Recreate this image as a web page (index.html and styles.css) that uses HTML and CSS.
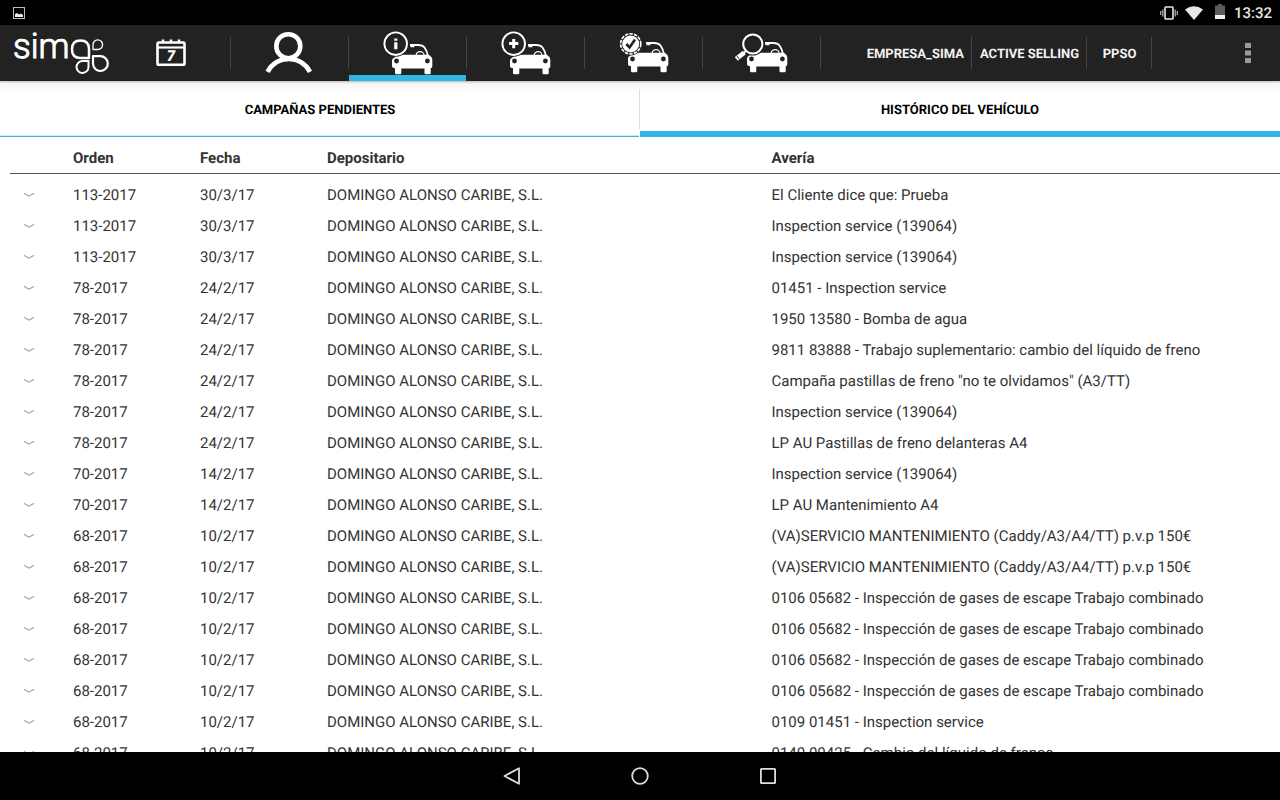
FILE: index.html
```html
<!DOCTYPE html>
<html lang="es">
<head>
<meta charset="utf-8">
<meta name="viewport" content="width=device-width, initial-scale=1">
<title>Histórico del vehículo</title>
<link rel="stylesheet" href="styles.css">
</head>
<body>
<svg class="defs" aria-hidden="true">
  <symbol id="car" viewBox="0 0 54 44" overflow="visible">
    <path d="M16 23.7H47.5Q51.3 25.5 51.3 29V35.5Q51.3 37 49.7 37.2V42Q49.7 43.2 48.5 43.2H44.8Q43.5 43.2 43.5 42V37.4H20.3V42Q20.3 43.2 19 43.2H15.3Q14 43.2 14 42V37.2Q11 37 11 35V29.5Q11 27.5 13.5 26.5Q14.5 24.5 16 23.7Z" fill="#fff"/>
    <path d="M29 14H37Q41.5 14 43.5 16.5Q46 20 46.8 24.5" fill="none" stroke="#fff" stroke-width="1.8"/>
    <path d="M29 13.2H33.4V16.2H29.6Z" fill="#fff"/>
    <path d="M35.2 24A3.9 3.4 0 0 1 43 24" fill="none" stroke="#fff" stroke-width="1.2"/>
    <circle cx="15.5" cy="30" r="2.4" fill="#222"/>
    <circle cx="46.4" cy="30" r="2.4" fill="#222"/>
  </symbol>
  <symbol id="chevron" viewBox="0 0 12 6">
    <path d="M.8 1.2L5 3.6Q6 4.1 7 3.6L11.2 1.2" fill="none" stroke="#aaa" stroke-width="1.2"/>
  </symbol>
</svg>

<div class="status">
  <svg width="12" height="12" viewBox="0 0 12 12" aria-hidden="true"><rect x=".5" y=".5" width="11" height="11" fill="none" stroke="#bbb"/><path d="M2 10V7L4 6L6 7.4L8 6.6L10 8V10Z" fill="#eee"/></svg>
  <div class="status-right">
    <svg width="18" height="14" viewBox="0 0 18 14" aria-hidden="true"><rect x="5" y="1" width="8" height="12" rx=".8" fill="none" stroke="#e6e6e6" stroke-width="1.6"/><path d="M.7 5V9M2.8 3.5V10.5M15.2 3.5V10.5M17.3 5V9" stroke="#aaa" stroke-width="1.3"/></svg>
    <svg width="18" height="14" viewBox="0 0 18 14" aria-hidden="true"><path d="M0 3.6Q9 -3 18 3.6L9 14Z" fill="#e8e8e8"/></svg>
    <svg class="battery" width="10" height="15" viewBox="0 0 10 15" aria-hidden="true"><path d="M0 1.5H3V0H7V1.5H10V11H0Z" fill="#5c5c5c"/><path d="M0 11H10V15H0Z" fill="#f2f2f2"/></svg>
    <span>13:32</span>
  </div>
</div>

<header class="bar">
  <svg class="logo" width="112" height="56" viewBox="0 0 112 56" role="img" aria-label="sima">
    <text x="13" y="33" class="logo-text">sim</text>
    <g fill="none" stroke="#fff" stroke-linejoin="round">
      <path d="M89 33H80.5Q72 33 72 24.2Q72 15.5 80.5 15.5Q89 15.5 89 24.2Z" stroke-width="2.5"/>
      <path d="M93 24.5V20A4.8 4.8 0 1 1 97.5 24.5Z" stroke-width="1.3"/>
      <path d="M93 31.2H100A7.4 7.4 0 1 1 93 38.8Z" stroke-width="2.2"/>
      <path d="M88.5 36H82A6 6 0 1 0 88.5 42Z" stroke-width="2"/>
    </g>
  </svg>
  <nav class="sections">
    <button class="section" aria-label="Agenda">
      <svg width="30" height="30" viewBox="0 0 30 30"><path d="M2.8 4.5H27.2Q28.5 4.5 28.5 5.7V25.5Q28.5 26.8 27.2 26.8H2.8Q1.5 26.8 1.5 25.5V5.7Q1.5 4.5 2.8 4.5Z" fill="none" stroke="#fff" stroke-width="2.6"/><path d="M2 9.5H28" stroke="#fff" stroke-width="2.2"/><path d="M7 1.5V4.5M15 1.5V4.5M23 1.5V4.5" stroke="#fff" stroke-width="2.6"/><text x="15" y="23" class="day">7</text></svg>
    </button>
    <button class="section" aria-label="Cliente">
      <svg width="54" height="44" viewBox="0 0 54 44"><circle cx="25.3" cy="15.2" r="12" fill="none" stroke="#fff" stroke-width="4.6"/><path d="M4.5 40.8C14 23.5 37.5 23.5 47 40.8" fill="none" stroke="#fff" stroke-width="4.6"/></svg>
    </button>
    <button class="section active" aria-label="Información del vehículo" aria-current="page">
      <svg width="54" height="44" viewBox="0 0 54 44"><use href="#car"/><circle cx="14.7" cy="12.7" r="13" fill="#222"/><circle cx="14.7" cy="12.7" r="11.3" fill="none" stroke="#fff" stroke-width="1.9"/><path d="M13.2 7.5H16.4V9.8H13.2ZM13.2 11.2H16.4V18.2H13.2Z" fill="#fff"/></svg>
    </button>
    <button class="section" aria-label="Añadir vehículo">
      <svg width="54" height="44" viewBox="0 0 54 44"><use href="#car"/><circle cx="14.7" cy="12.7" r="13" fill="#222"/><circle cx="14.7" cy="12.7" r="11.3" fill="none" stroke="#fff" stroke-width="1.9"/><path d="M14.7 8V17.2M10.1 12.6H19.3" stroke="#fff" stroke-width="3"/></svg>
    </button>
    <button class="section" aria-label="Vehículo verificado">
      <svg width="54" height="44" viewBox="0 0 54 44"><use href="#car" y="-2"/><circle cx="13.7" cy="12.9" r="11.6" fill="#222"/><circle cx="13.7" cy="12.9" r="10.1" fill="none" stroke="#fff" stroke-width="1.6" stroke-dasharray="3.4 1.2"/><circle cx="13.7" cy="12.9" r="8.5" fill="#fff"/><path d="M9.3 13L12.5 16.4L18 8.5" fill="none" stroke="#222" stroke-width="2.6"/></svg>
    </button>
    <button class="section" aria-label="Buscar vehículo">
      <svg width="54" height="44" viewBox="0 0 54 44"><use href="#car" x="1" y="-2"/><circle cx="17.8" cy="13" r="11.6" fill="#222"/><circle cx="17.8" cy="13" r="9.6" fill="none" stroke="#fff" stroke-width="2"/><path d="M11 20L8.3 22.4" stroke="#fff" stroke-width="1.8"/><path d="M9.3 21.5L1.3 28" stroke="#fff" stroke-width="4.8"/><path d="M2.1 25.2L4.5 28.4" stroke="#222" stroke-width="1"/></svg>
    </button>
  </nav>
  <nav class="links">
    <button class="link">EMPRESA_SIMA</button>
    <button class="link">ACTIVE SELLING</button>
    <button class="link">PPSO</button>
  </nav>
  <button class="more" aria-label="Más opciones">
    <svg width="6" height="20" viewBox="0 0 6 20"><path d="M0 0H6V5H0ZM0 7.5H6V12.5H0ZM0 15H6V20H0Z" fill="#999"/></svg>
  </button>
</header>

<div class="tabs" role="tablist">
  <button class="tab" role="tab" aria-selected="false">CAMPAÑAS PENDIENTES</button>
  <button class="tab" role="tab" aria-selected="true">HISTÓRICO DEL VEHÍCULO</button>
</div>

<main class="content">
  <table class="history">
    <colgroup><col class="c-toggle"><col class="c-short"><col class="c-short"><col class="c-dealer"><col class="c-fault"></colgroup>
    <thead><tr><td></td><th scope="col">Orden</th><th scope="col">Fecha</th><th scope="col">Depositario</th><th scope="col">Avería</th></tr></thead>
    <tbody>
      <tr><td><button class="toggle" aria-label="Desplegar"><svg width="12" height="6"><use href="#chevron"/></svg></button></td><td>113-2017</td><td>30/3/17</td><td>DOMINGO ALONSO CARIBE, S.L.</td><td>El Cliente dice que: Prueba</td></tr>
      <tr><td><button class="toggle" aria-label="Desplegar"><svg width="12" height="6"><use href="#chevron"/></svg></button></td><td>113-2017</td><td>30/3/17</td><td>DOMINGO ALONSO CARIBE, S.L.</td><td>Inspection service (139064)</td></tr>
      <tr><td><button class="toggle" aria-label="Desplegar"><svg width="12" height="6"><use href="#chevron"/></svg></button></td><td>113-2017</td><td>30/3/17</td><td>DOMINGO ALONSO CARIBE, S.L.</td><td>Inspection service (139064)</td></tr>
      <tr><td><button class="toggle" aria-label="Desplegar"><svg width="12" height="6"><use href="#chevron"/></svg></button></td><td>78-2017</td><td>24/2/17</td><td>DOMINGO ALONSO CARIBE, S.L.</td><td>01451 - Inspection service</td></tr>
      <tr><td><button class="toggle" aria-label="Desplegar"><svg width="12" height="6"><use href="#chevron"/></svg></button></td><td>78-2017</td><td>24/2/17</td><td>DOMINGO ALONSO CARIBE, S.L.</td><td>1950 13580 - Bomba de agua</td></tr>
      <tr><td><button class="toggle" aria-label="Desplegar"><svg width="12" height="6"><use href="#chevron"/></svg></button></td><td>78-2017</td><td>24/2/17</td><td>DOMINGO ALONSO CARIBE, S.L.</td><td>9811 83888 - Trabajo suplementario: cambio del líquido de freno</td></tr>
      <tr><td><button class="toggle" aria-label="Desplegar"><svg width="12" height="6"><use href="#chevron"/></svg></button></td><td>78-2017</td><td>24/2/17</td><td>DOMINGO ALONSO CARIBE, S.L.</td><td>Campaña pastillas de freno "no te olvidamos" (A3/TT)</td></tr>
      <tr><td><button class="toggle" aria-label="Desplegar"><svg width="12" height="6"><use href="#chevron"/></svg></button></td><td>78-2017</td><td>24/2/17</td><td>DOMINGO ALONSO CARIBE, S.L.</td><td>Inspection service (139064)</td></tr>
      <tr><td><button class="toggle" aria-label="Desplegar"><svg width="12" height="6"><use href="#chevron"/></svg></button></td><td>78-2017</td><td>24/2/17</td><td>DOMINGO ALONSO CARIBE, S.L.</td><td>LP AU Pastillas de freno delanteras A4</td></tr>
      <tr><td><button class="toggle" aria-label="Desplegar"><svg width="12" height="6"><use href="#chevron"/></svg></button></td><td>70-2017</td><td>14/2/17</td><td>DOMINGO ALONSO CARIBE, S.L.</td><td>Inspection service (139064)</td></tr>
      <tr><td><button class="toggle" aria-label="Desplegar"><svg width="12" height="6"><use href="#chevron"/></svg></button></td><td>70-2017</td><td>14/2/17</td><td>DOMINGO ALONSO CARIBE, S.L.</td><td>LP AU Mantenimiento A4</td></tr>
      <tr><td><button class="toggle" aria-label="Desplegar"><svg width="12" height="6"><use href="#chevron"/></svg></button></td><td>68-2017</td><td>10/2/17</td><td>DOMINGO ALONSO CARIBE, S.L.</td><td>(VA)SERVICIO MANTENIMIENTO (Caddy/A3/A4/TT) p.v.p 150€</td></tr>
      <tr><td><button class="toggle" aria-label="Desplegar"><svg width="12" height="6"><use href="#chevron"/></svg></button></td><td>68-2017</td><td>10/2/17</td><td>DOMINGO ALONSO CARIBE, S.L.</td><td>(VA)SERVICIO MANTENIMIENTO (Caddy/A3/A4/TT) p.v.p 150€</td></tr>
      <tr><td><button class="toggle" aria-label="Desplegar"><svg width="12" height="6"><use href="#chevron"/></svg></button></td><td>68-2017</td><td>10/2/17</td><td>DOMINGO ALONSO CARIBE, S.L.</td><td>0106 05682 - Inspección de gases de escape Trabajo combinado</td></tr>
      <tr><td><button class="toggle" aria-label="Desplegar"><svg width="12" height="6"><use href="#chevron"/></svg></button></td><td>68-2017</td><td>10/2/17</td><td>DOMINGO ALONSO CARIBE, S.L.</td><td>0106 05682 - Inspección de gases de escape Trabajo combinado</td></tr>
      <tr><td><button class="toggle" aria-label="Desplegar"><svg width="12" height="6"><use href="#chevron"/></svg></button></td><td>68-2017</td><td>10/2/17</td><td>DOMINGO ALONSO CARIBE, S.L.</td><td>0106 05682 - Inspección de gases de escape Trabajo combinado</td></tr>
      <tr><td><button class="toggle" aria-label="Desplegar"><svg width="12" height="6"><use href="#chevron"/></svg></button></td><td>68-2017</td><td>10/2/17</td><td>DOMINGO ALONSO CARIBE, S.L.</td><td>0106 05682 - Inspección de gases de escape Trabajo combinado</td></tr>
      <tr><td><button class="toggle" aria-label="Desplegar"><svg width="12" height="6"><use href="#chevron"/></svg></button></td><td>68-2017</td><td>10/2/17</td><td>DOMINGO ALONSO CARIBE, S.L.</td><td>0109 01451 - Inspection service</td></tr>
      <tr><td><button class="toggle" aria-label="Desplegar"><svg width="12" height="6"><use href="#chevron"/></svg></button></td><td>68-2017</td><td>10/2/17</td><td>DOMINGO ALONSO CARIBE, S.L.</td><td>0140 00425 - Cambio del líquido de frenos</td></tr>
    </tbody>
  </table>
</main>

<footer class="system">
  <button class="key" aria-label="Atrás"><svg width="20" height="20" viewBox="0 0 20 20"><path d="M17 2.2V17.8L2.5 10Z"/></svg></button>
  <button class="key" aria-label="Inicio"><svg width="20" height="20" viewBox="0 0 20 20"><circle cx="10" cy="10" r="7.8"/></svg></button>
  <button class="key" aria-label="Recientes"><svg width="20" height="20" viewBox="0 0 20 20"><rect x="2.9" y="2.9" width="14.2" height="14.2" rx=".6"/></svg></button>
</footer>
</body>
</html>
```
FILE: styles.css
```css
* { box-sizing: border-box; }

body {
  margin: 0;
  height: 100vh;
  display: flex;
  flex-direction: column;
  overflow: hidden;
  background: #fff;
  color: #333;
  font: 15px/20px Roboto, "Liberation Sans", sans-serif;
  text-rendering: geometricPrecision;
}

button {
  margin: 0;
  padding: 0;
  border: 0;
  background: none;
  color: inherit;
  font: inherit;
  text-rendering: inherit;
  cursor: pointer;
}

svg { display: block; flex: none; }

.defs { position: absolute; width: 0; height: 0; }

.status {
  flex: none;
  height: 25px;
  padding: 0 8px 0 13px;
  display: flex;
  align-items: center;
  justify-content: space-between;
  background: #000;
  color: #e6e6e6;
  font-weight: 500;
}

.status-right { display: flex; align-items: center; gap: 7px; }
.battery { margin: 0 2px 2px 5px; }

.bar {
  flex: none;
  height: 56px;
  display: flex;
  background: #222;
  color: #fff;
  box-shadow: 0 1px 2px rgba(0, 0, 0, 0.25);
  position: relative;
}

.logo-text { fill: #fff; stroke: #fff; stroke-width: 1; font-size: 35px; font-weight: 300; }
.day { fill: #fff; font-size: 15px; font-weight: 900; font-style: italic; text-anchor: middle; }

.sections { display: flex; }

.section {
  width: 118px;
  padding-right: 1px;
  display: grid;
  place-items: center;
}

.section,
.link {
  background: linear-gradient(#444, #444) right / 1px 32px no-repeat;
}

.section.active {
  background:
    linear-gradient(#444, #444) right / 1px 32px no-repeat,
    linear-gradient(#33b5e5, #33b5e5) left bottom / calc(100% - 1px) 6px no-repeat;
}

.sections { margin-left: 1px; }
.section:first-child { padding-right: 3px; }

.links { margin-left: auto; display: flex; }

.link {
  min-width: 65px;
  padding: 3px 8px 0;
  color: #f3f3f3;
  font-size: 13px;
  font-weight: 700;
}

.more {
  width: 64px;
  margin-left: 64px;
  display: grid;
  place-items: center;
}

.tabs {
  flex: none;
  height: 56px;
  display: grid;
  grid-template-columns: 1fr 1fr;
  background: linear-gradient(#f3f3f3, #fff 12px);
}

.tab {
  padding-top: 3px;
  color: #000;
  font-size: 13px;
  font-weight: 700;
  background:
    linear-gradient(#ddd, #ddd) right / 1px 40px no-repeat,
    linear-gradient(#cdeaf6 50%, #33b5e5 50%) left bottom / calc(100% - 1px) 2px no-repeat;
}

.tab[aria-selected="true"] {
  background: linear-gradient(#33b5e5, #33b5e5) bottom / 100% 6px no-repeat;
}

.content {
  flex: 1;
  min-height: 0;
  padding-left: 10px;
  overflow: hidden;
}

.history {
  width: 100%;
  table-layout: fixed;
  border-collapse: separate;
  border-spacing: 0;
}

.c-toggle { width: 63px; }
.c-short { width: 10%; }
.c-dealer { width: 35%; }
.c-fault { width: auto; }

.history th,
.history td {
  height: 31px;
  padding: 0;
  text-align: left;
  white-space: nowrap;
}

.history thead th,
.history thead td {
  height: 37px;
  padding-top: 5px;
  border-bottom: 1px solid #555;
}

.history tbody::before { content: ""; display: block; height: 5px; }

.toggle {
  width: 37px;
  height: 31px;
  display: grid;
  place-items: center;
}

.system {
  flex: none;
  height: 48px;
  display: flex;
  justify-content: center;
  background: #000;
}

.key {
  width: 128px;
  display: grid;
  place-items: center;
}

.key svg { fill: none; stroke: #ddd; stroke-width: 1.8; stroke-linejoin: round; }
```
